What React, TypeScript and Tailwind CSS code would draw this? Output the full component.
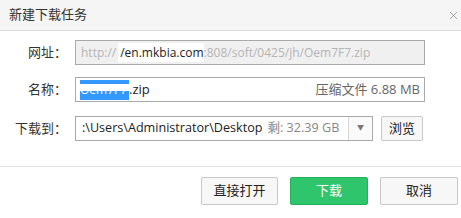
import { X } from "lucide-react";

export default function App() {
  return (
    <div className="w-[461px] h-[218px] bg-white overflow-hidden font-['Open_Sans','Noto_Sans_CJK_SC',sans-serif] text-[13px] text-[#333]">
      {/* title bar */}
      <div className="h-[31px] bg-[#f5f5f5] border-b border-[#dedede] flex items-center justify-between pl-[9px] pr-[1px]">
        <span className="text-[13px] text-[#333]">新建下载任务</span>
        <X className="w-[13px] h-[13px] text-[#777]" strokeWidth={1.2} />
      </div>

      {/* form */}
      <div className="pt-[9px]">
        <div className="flex items-center h-[25px]">
          <div className="w-[68px] text-right pr-[1px]">网址：</div>
          <div className="ml-[7px] w-[350px] h-[25px] border border-[#a9a9a9] bg-[#f0f0f0] flex items-center pl-[5px] overflow-hidden whitespace-nowrap text-[12px]">
            <span className="text-[#b5b5b5]">http://</span>
            <span className="ml-[2px] bg-white text-[#222] pl-[2px] h-[19px] flex items-center">/en.mkbia.com</span>
            <span className="text-[#b5b5b5]">:808/soft/0425/jh/Oem7F7.zip</span>
          </div>
        </div>

        <div className="flex items-center h-[25px] mt-[12px]">
          <div className="w-[68px] text-right pr-[1px]">名称：</div>
          <div className="ml-[7px] w-[350px] h-[25px] border border-[#a9a9a9] bg-white flex items-center pl-[4px] pr-[4px] whitespace-nowrap">
            <span className="relative inline-flex items-center h-[20px] w-[49px] bg-[#3399ff] text-white overflow-hidden">
              <span className="absolute left-0 right-0 top-[4px] h-[7px] bg-white" />
              <span className="relative text-[12px]">Oem7F7</span>
            </span>
            <span className="text-[#222]">.zip</span>
            <span className="ml-auto text-[#666]">压缩文件 6.88 MB</span>
          </div>
        </div>

        <div className="flex items-center h-[25px] mt-[14px]">
          <div className="w-[68px] text-right pr-[1px]">下载到：</div>
          <div className="ml-[7px] w-[298px] h-[25px] border border-[#a9a9a9] bg-white flex items-center whitespace-nowrap overflow-hidden">
            <div className="flex-1 flex items-center pl-[6px] overflow-hidden text-[12.6px]">
              <span className="text-[#222]">:\Users\Administrator\Desktop</span>
              <span className="ml-[5px] text-[#888]">剩: 32.39 GB</span>
            </div>
            <div className="w-[24px] h-full border-l border-[#d5d5d5] bg-[#fafafa] flex items-center justify-center">
              <span className="text-[7px] text-[#777]">▼</span>
            </div>
          </div>
          <button className="ml-[8px] w-[42px] h-[25px] border border-[#c8c8c8] rounded-[2px] bg-[#f7f7f7] text-[#222] flex items-center justify-center">
            浏览
          </button>
        </div>
      </div>

      {/* footer */}
      <div className="mt-[25px] border-t border-[#e3e3e3] flex justify-end gap-[12px] pt-[10px] pr-[3px]">
        <button className="w-[77px] h-[28px] border border-[#c8c8c8] rounded-[2px] bg-[#f7f7f7] text-[#222]">直接打开</button>
        <button className="w-[78px] h-[28px] border border-[#22b05a] rounded-[2px] bg-[#2ec56c] text-white">下载</button>
        <button className="w-[78px] h-[28px] border border-[#c8c8c8] rounded-[2px] bg-[#f7f7f7] text-[#222]">取消</button>
      </div>
    </div>
  );
}
